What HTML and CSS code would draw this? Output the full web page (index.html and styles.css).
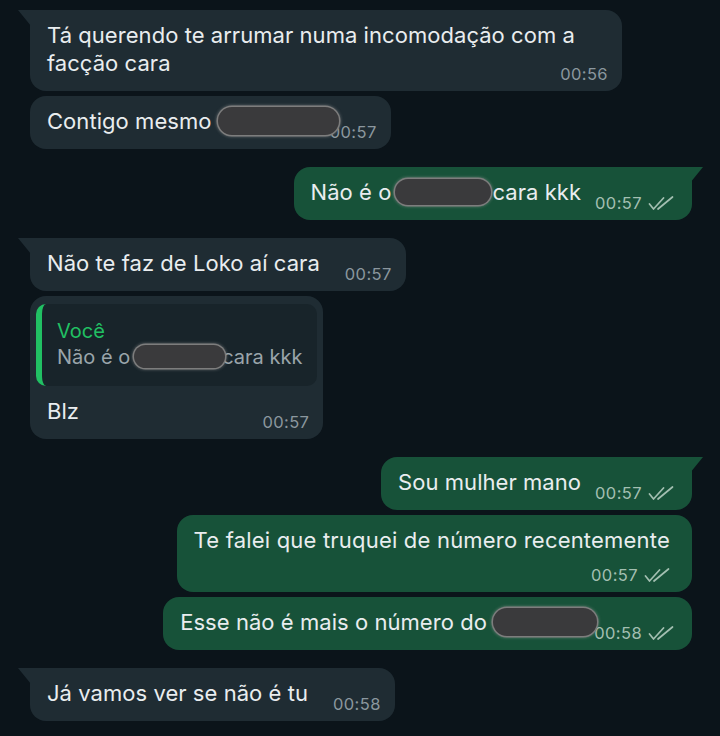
FILE: index.html
```html
<!DOCTYPE html>
<html lang="pt">
<head>
<meta charset="utf-8">
<link rel="stylesheet" href="styles.css">
</head>
<body>
<div class="chat">
  <div class="msg in tail stack first">
    <div class="text">Tá querendo te arrumar numa incomodação com a facção cara</div>
    <div class="meta m1">00:56</div>
  </div>
  <div class="msg in close">
    <div class="text">Contigo mesmo <span class="blob b2"></span></div>
    <div class="meta">00:57</div>
  </div>
  <div class="msg out tail">
    <div class="text">Não é o<span class="blob b3"></span>cara kkk</div>
    <div class="meta">00:57 <svg class="ticks" viewBox="0 0 26 14"><path d="M1.5 8 L5.5 13 L15.5 2 M10 13 L24.5 1"/></svg></div>
  </div>
  <div class="msg in tail">
    <div class="text">Não te faz de Loko aí cara</div>
    <div class="meta">00:57</div>
  </div>
  <div class="msg in close reply">
    <div class="quote">
      <div class="qname">Você</div>
      <div class="qtext">Não é o<span class="blob b5"></span>cara kkk</div>
    </div>
    <div class="row">
      <div class="text">Blz</div>
      <div class="meta">00:57</div>
    </div>
  </div>
  <div class="msg out tail">
    <div class="text">Sou mulher mano</div>
    <div class="meta">00:57 <svg class="ticks" viewBox="0 0 26 14"><path d="M1.5 8 L5.5 13 L15.5 2 M10 13 L24.5 1"/></svg></div>
  </div>
  <div class="msg out close stack s7">
    <div class="text">Te falei que truquei de número recentemente</div>
    <div class="meta m7">00:57 <svg class="ticks" viewBox="0 0 26 14"><path d="M1.5 8 L5.5 13 L15.5 2 M10 13 L24.5 1"/></svg></div>
  </div>
  <div class="msg out close">
    <div class="text">Esse não é mais o número do <span class="blob b8"></span></div>
    <div class="meta">00:58 <svg class="ticks" viewBox="0 0 26 14"><path d="M1.5 8 L5.5 13 L15.5 2 M10 13 L24.5 1"/></svg></div>
  </div>
  <div class="msg in tail">
    <div class="text">Já vamos ver se não é tu</div>
    <div class="meta">00:58</div>
  </div>
</div>
</body>
</html>
```

FILE: styles.css
```css
html, body {
  margin: 0;
  padding: 0;
  background: #0b141a;
}
body {
  width: 720px;
  height: 736px;
  overflow: hidden;
  font-family: Inter, Roboto, "Liberation Sans", sans-serif;
  color: #e9edef;
}
.chat {
  display: flex;
  flex-direction: column;
  padding: 10px 28px 0 30px;
}
.msg {
  position: relative;
  display: flex;
  align-items: flex-end;
  max-width: 560px;
  padding: 11px 14px 14px 17px;
  border-radius: 16px;
  margin-top: 18px;
  box-sizing: border-box;
}
.msg.first { margin-top: 0; }
.msg.close { margin-top: 5px; }
.msg.in {
  align-self: flex-start;
  background: #1f2c33;
}
.msg.out {
  align-self: flex-end;
  background: #175239;
  padding-right: 18px;
}
.msg.in.tail { border-top-left-radius: 0; }
.msg.out.tail { border-top-right-radius: 0; }
.msg.tail::before {
  content: "";
  position: absolute;
  top: 0;
  width: 13px;
  height: 16px;
}
.msg.in.tail::before {
  left: -12px;
  background: #1f2c33;
  clip-path: polygon(0 0, 100% 0, 100% 100%);
}
.msg.out.tail::before {
  right: -11px;
  background: #175239;
  clip-path: polygon(0 0, 100% 0, 0 100%);
}
.text {
  font-size: 22px;
  line-height: 28px;
  letter-spacing: 0.05px;
}
.meta {
  flex: none;
  display: flex;
  align-items: center;
  gap: 6px;
  font-size: 16.5px;
  line-height: 18px;
  letter-spacing: 0.4px;
  margin-bottom: -6px;
  margin-left: 25px;
  color: #8b979e;
  position: relative;
}
.msg.out .meta {
  margin-left: 14px;
  color: #a3bfb1;
}
.ticks {
  width: 26px;
  height: 14px;
  fill: none;
  stroke: #a3bfb1;
  stroke-width: 1.7;
  stroke-linecap: round;
  stroke-linejoin: round;
}
.msg.stack {
  flex-direction: column;
  align-items: stretch;
}
.msg.stack .meta { align-self: flex-end; }
.msg.first { max-width: 592px; }
.meta.m1 { margin-top: -12px; }
.meta.m7 { margin-top: 12px; }
.msg.s7 { padding-right: 22px; }
.msg.s7 .text { letter-spacing: 0.2px; }

.blob {
  display: inline-block;
  position: relative;
  z-index: 2;
  vertical-align: middle;
  background: #3a3a3c;
  border-radius: 14px;
  box-shadow: 0 0 0 1.5px #7d7d7d, 0 0 3px 2px rgba(150,150,150,0.45);
}
.b2 { width: 121px; height: 28px; margin-top: -4px; margin-right: -34px; }
.b3 { width: 96px; height: 26px; margin: -4px 1px 0 4px; }
.b5 { width: 91px; height: 23px; margin: -4px -3px 0 4px; }
.b8 { width: 104px; height: 28px; margin-top: -4px; margin-right: -17px; }

.reply {
  flex-direction: column;
  align-items: stretch;
  padding: 8px 6px 14px 6px;
}
.quote {
  background: #18242a;
  border-radius: 10px;
  border-left: 6px solid #21c063;
  padding: 15px 15px 15px 15px;
}
.qname {
  color: #21c063;
  font-size: 20px;
  line-height: 24px;
}
.qtext {
  color: #9aa5ab;
  font-size: 20px;
  line-height: 28px;
}
.row {
  display: flex;
  align-items: flex-end;
  justify-content: space-between;
  padding: 11px 8px 0 11px;
}
```
